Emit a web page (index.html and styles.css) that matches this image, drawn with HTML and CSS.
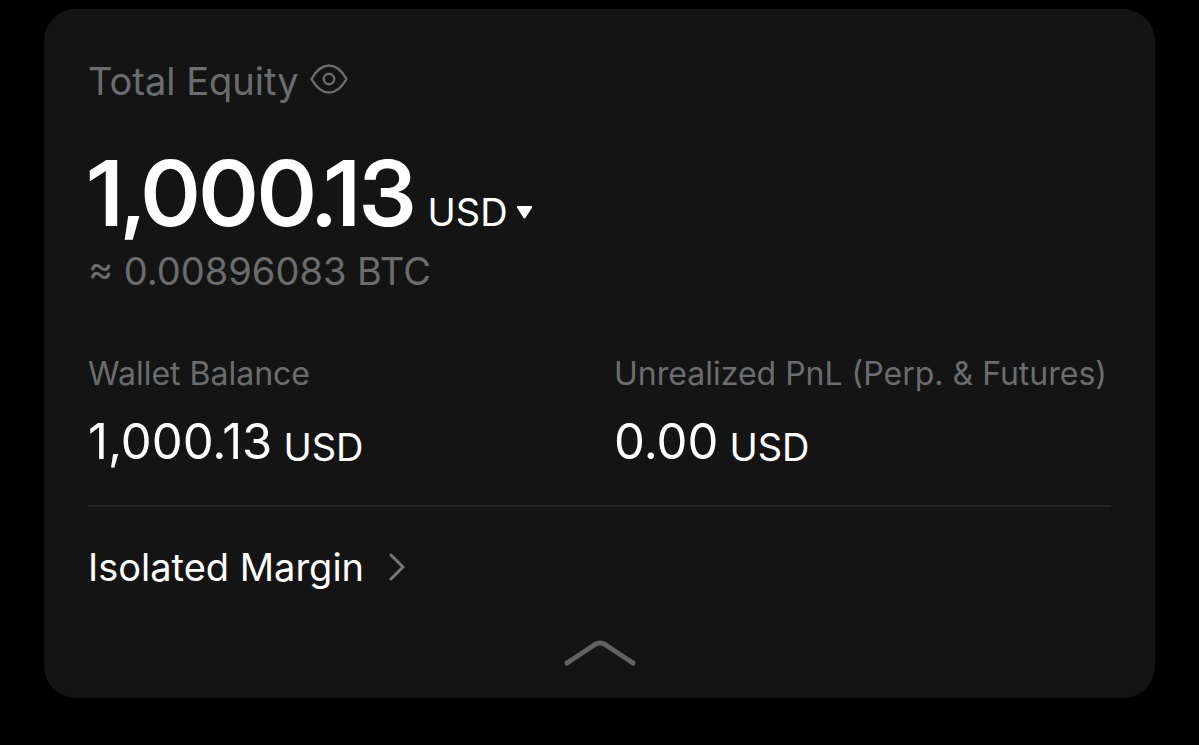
FILE: index.html
```html
<!DOCTYPE html>
<html lang="en">
<head>
    <meta charset="UTF-8">
    <meta name="viewport" content="width=device-width, initial-scale=1.0">
    <title>Total Equity</title>
    <link rel="stylesheet" href="styles.css">
</head>
<body>
    <main class="card">
        <!-- Total equity -->
        <div class="equity-header">
            <h1>Total Equity</h1>
            <button class="eye-button" aria-label="Hide balance">
                <svg width="38" height="30" viewBox="0 0 38 30" fill="none" stroke="#6b6c6e" stroke-width="2.4" stroke-linejoin="round">
                    <path d="M1.5 15C6 7 11 1.5 19 1.5S32 7 36.5 15C32 23 27 28.5 19 28.5S6 23 1.5 15Z"/>
                    <circle cx="19" cy="15" r="5.2"/>
                </svg>
            </button>
        </div>
        <div class="equity-amount">
            <span class="amount">1,000.13</span>
            <button class="currency-button">USD
                <svg width="17" height="13" viewBox="0 0 18 14" fill="#fff">
                    <path d="M2 0h14q2 0 1 2l-7 11q-1 1-2 0L1 2Q0 0 2 0Z"/>
                </svg>
            </button>
        </div>
        <p class="btc-amount">≈ 0.00896083 BTC</p>

        <!-- Balances -->
        <dl class="balances">
            <div class="balance">
                <dt>Wallet Balance</dt>
                <dd>1,000.13 <span class="unit">USD</span></dd>
            </div>
            <div class="balance">
                <dt>Unrealized PnL (Perp. &amp; Futures)</dt>
                <dd>0.00 <span class="unit">USD</span></dd>
            </div>
        </dl>

        <a class="margin-link" href="#">Isolated Margin
            <svg width="16" height="28" viewBox="0 0 16 28" fill="none" stroke="#77787a" stroke-width="3" stroke-linecap="round">
                <path d="M2 2l12 12L2 26"/>
            </svg>
        </a>

        <button class="collapse-button" aria-label="Collapse">
            <svg width="72" height="28" viewBox="0 0 72 28" fill="none" stroke="#616263" stroke-width="5" stroke-linecap="round" stroke-linejoin="round">
                <path d="M3 24L31 5.5Q36 2.5 41 5.5L69 24"/>
            </svg>
        </button>
    </main>
</body>
</html>
```
FILE: styles.css
```css
* {
    box-sizing: border-box;
}

body {
    font-family: Inter, sans-serif;
    margin: 0;
    padding: 9px 44px 0;
    background-color: #000;
    color: #fff;
}

button {
    padding: 0;
    border: none;
    background: none;
    color: inherit;
    font: inherit;
    cursor: pointer;
}

svg {
    display: block;
}

.card {
    display: flex;
    flex-direction: column;
    padding: 48px 44px 31px;
    background: #141414;
    border-radius: 32px;
}

.equity-header {
    display: flex;
    align-items: center;
    gap: 11px;
    height: 48px;
    color: #6b6c6e;
}

.eye-button {
    padding-bottom: 4px;
}

h1 {
    margin: 0;
    font-size: 38px;
    font-weight: 400;
}

.equity-amount {
    display: flex;
    align-items: baseline;
    gap: 12px;
    margin-top: 36px;
    line-height: 104px;
}

.amount {
    font-family: "Inter Display", Inter, sans-serif;
    font-size: 91px;
    font-weight: 600;
}

.currency-button {
    display: flex;
    align-items: center;
    gap: 8px;
    font-size: 38px;
    line-height: 48px;
}

.btc-amount {
    margin: 2px 0 0;
    color: #6b6c6e;
    font-size: 38px;
    line-height: 48px;
}

.balances {
    display: grid;
    grid-template-columns: 1fr 497px;
    margin: 57px 0 0;
    padding-bottom: 34px;
    border-bottom: 2px solid #202225;
}

dt {
    color: #6b6c6e;
    font-size: 32px;
    line-height: 44px;
}

dd {
    display: flex;
    align-items: flex-end;
    gap: 11px;
    margin: 17px 0 0;
    font-size: 49px;
    line-height: 58px;
}

.unit {
    font-size: 38px;
    line-height: 48px;
}

.margin-link {
    display: flex;
    align-items: center;
    align-self: flex-start;
    gap: 25px;
    margin-top: 36px;
    color: #fff;
    font-size: 38px;
    line-height: 48px;
    text-decoration: none;
}

.collapse-button {
    align-self: center;
    margin-top: 48px;
}
```
